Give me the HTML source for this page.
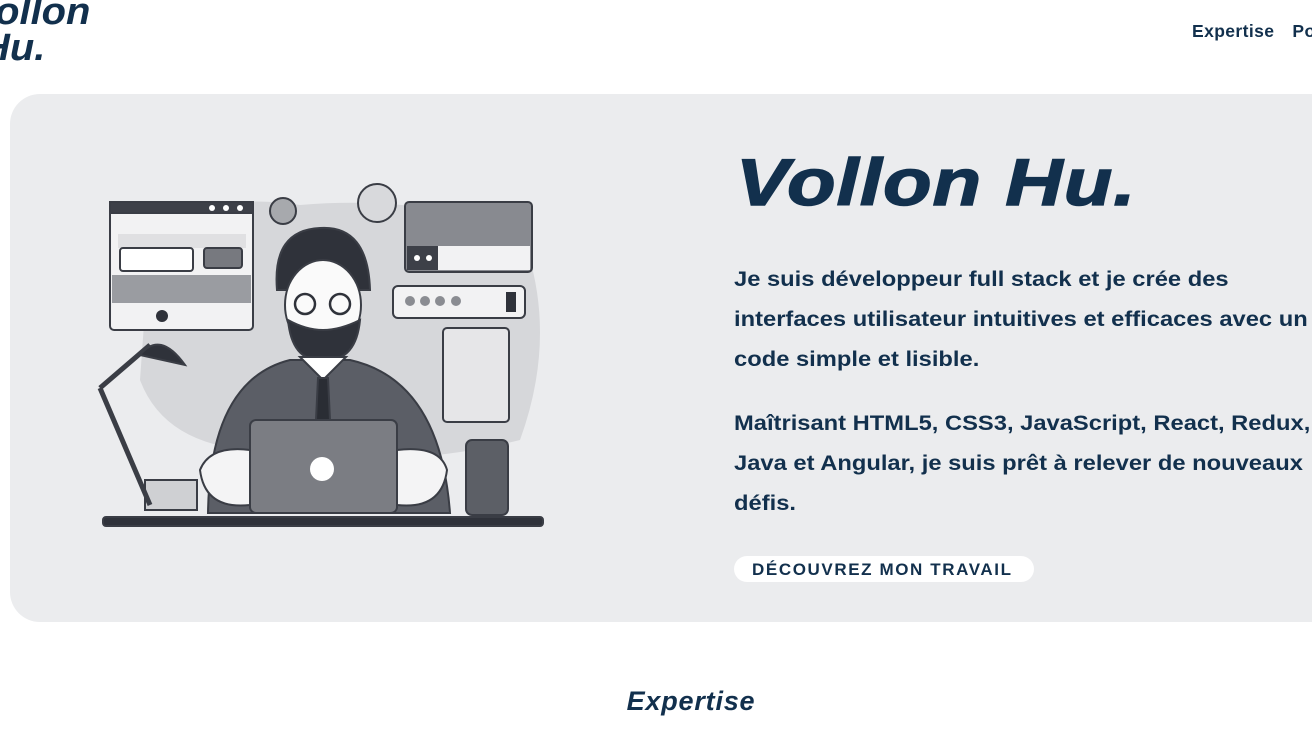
<!DOCTYPE html>
<html><head><meta charset="utf-8"><style>
html,body{margin:0;padding:0;width:1312px;height:738px;overflow:hidden;background:#fff;font-family:"Liberation Sans",sans-serif;color:#12304d}
.logo{position:absolute;left:-30px;top:-6px;font-weight:bold;font-style:italic;font-size:38px;line-height:36px;letter-spacing:0px;transform:scaleX(1.05);transform-origin:left top}
.nav{position:absolute;top:21px;left:1192px;font-weight:bold;font-size:17.5px;letter-spacing:0.4px;white-space:nowrap}
.nav span{margin-right:18px}
.hero{position:absolute;left:10px;top:94px;width:1340px;height:528px;background:#ebecee;border-radius:30px}
.title{position:absolute;left:736px;top:142px;font-weight:bold;font-style:italic;font-size:66px;line-height:80px;white-space:nowrap;transform:scaleX(1.2);transform-origin:left top;letter-spacing:1px;-webkit-text-stroke:1.5px #12304d}
.p{position:absolute;left:734px;font-weight:bold;font-size:21px;line-height:40px;white-space:nowrap;transform:scaleX(1.13);transform-origin:left top}
.btn{position:absolute;left:734px;top:556px;width:300px;height:26px;background:#fff;border-radius:13px;font-weight:bold;font-size:17px;line-height:27px;text-indent:18px;letter-spacing:1.6px;white-space:nowrap}
.h2{position:absolute;left:0;width:1382px;text-align:center;top:686px;font-weight:bold;font-style:italic;font-size:27px;letter-spacing:0.8px}
</style></head><body>
<div class="logo">Vollon<br>&nbsp;Hu.</div>
<div class="nav"><span>Expertise</span>Portfolio</div>
<div class="hero"></div>
<svg style="position:absolute;left:0;top:0" width="700" height="600" viewBox="0 0 700 600">
<path d="M150 240 Q200 190 300 205 Q420 195 520 230 Q560 330 520 440 Q400 470 300 450 Q170 460 140 380 Z" fill="#d6d7da"/>
<g stroke="#3a3d45" stroke-width="2">
<rect x="110" y="202" width="143" height="128" rx="4" fill="#f2f2f3"/>
<rect x="110" y="202" width="143" height="11" fill="#3d4048"/>
<rect x="118" y="234" width="128" height="14" fill="#e0e0e2" stroke="none"/>
<rect x="112" y="275" width="139" height="28" fill="#9a9ca1" stroke="none"/>
<rect x="120" y="248" width="73" height="23" rx="3" fill="#fff"/>
<rect x="204" y="248" width="38" height="20" rx="3" fill="#77797f"/>
<rect x="405" y="202" width="127" height="70" rx="4" fill="#888a90"/>
<rect x="438" y="246" width="92" height="24" fill="#f2f2f3" stroke="none"/>
<rect x="407" y="246" width="31" height="24" fill="#3d4048" stroke="none"/>
<rect x="393" y="286" width="132" height="32" rx="5" fill="#f2f2f3"/>
<rect x="443" y="328" width="66" height="94" rx="4" fill="#e6e6e8"/>
<circle cx="377" cy="203" r="19" fill="#d8d9dc"/>
<circle cx="283" cy="211" r="13" fill="#a7a9ad"/>
<path d="M208 513 Q210 380 290 360 L350 360 Q440 380 450 513 Z" fill="#5b5e66"/>
<path d="M277 290 Q272 230 320 228 Q368 225 370 290 Z" fill="#2f323a"/>
<ellipse cx="323" cy="305" rx="38" ry="45" fill="#fafafa"/>
<path d="M288 320 Q292 362 323 360 Q356 362 360 320 Q340 330 323 330 Q306 330 288 320Z" fill="#2f323a"/>
<path d="M300 357 L323 380 L346 357 Z" fill="#fff"/>
<path d="M318 378 L328 378 L330 420 L316 420 Z" fill="#2a2d34"/>
<path d="M200 470 Q210 445 250 450 L250 505 Q205 510 200 470Z" fill="#f4f4f5"/>
<path d="M447 470 Q440 445 397 450 L397 505 Q442 510 447 470Z" fill="#f4f4f5"/>
<rect x="250" y="420" width="147" height="93" rx="6" fill="#7b7d83"/>
<rect x="145" y="480" width="52" height="30" fill="#cfd0d3"/>
<path d="M100 388 L150 505" stroke-width="5"/>
<path d="M100 388 L150 345" stroke-width="5"/>
<path d="M140 355 Q160 330 185 365 Z" fill="#2f323a"/>
<rect x="466" y="440" width="42" height="75" rx="6" fill="#5c5f66"/>
<rect x="103" y="517" width="440" height="9" rx="3" fill="#2f323a"/>
</g>
<circle cx="322" cy="469" r="12" fill="#fff"/>
<circle cx="212" cy="208" r="3" fill="#fff"/><circle cx="226" cy="208" r="3" fill="#fff"/><circle cx="240" cy="208" r="3" fill="#fff"/>
<circle cx="162" cy="316" r="6" fill="#2f323a"/>
<circle cx="417" cy="258" r="3" fill="#fff"/><circle cx="429" cy="258" r="3" fill="#fff"/>
<g fill="#8a8c92"><circle cx="410" cy="301" r="5"/><circle cx="425" cy="301" r="5"/><circle cx="440" cy="301" r="5"/><circle cx="456" cy="301" r="5"/></g>
<rect x="506" y="292" width="10" height="20" fill="#2f323a"/>
<g fill="none" stroke="#2f323a" stroke-width="2.5"><circle cx="305" cy="304" r="10"/><circle cx="340" cy="304" r="10"/></g>
</svg>
<div class="title">Vollon Hu.</div>
<div class="p" style="top:260px">Je suis développeur full stack et je crée des<br>interfaces utilisateur intuitives et efficaces avec un<br>code simple et lisible.</div>
<div class="p" style="top:404px">Maîtrisant HTML5, CSS3, JavaScript, React, Redux,<br>Java et Angular, je suis prêt à relever de nouveaux<br>défis.</div>
<div class="btn">DÉCOUVREZ MON TRAVAIL</div>
<div class="h2">Expertise</div>
</body></html>
